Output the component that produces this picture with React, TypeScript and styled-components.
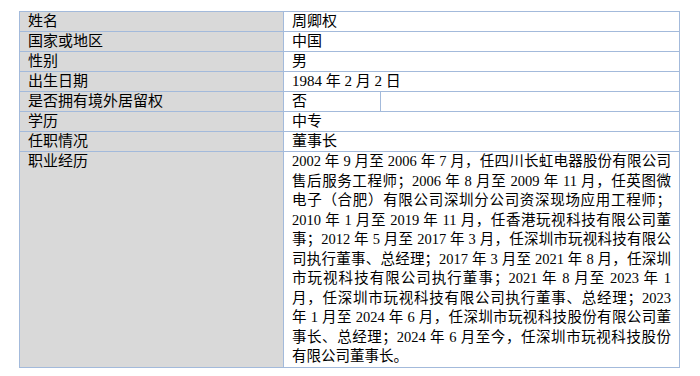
import styled, { createGlobalStyle } from 'styled-components';

const GlobalStyle = createGlobalStyle`
  html, body {
    margin: 0;
    padding: 0;
    background: #ffffff;
  }
  body {
    font-family: "Liberation Serif", "Noto Sans CJK SC", serif;
    color: #000;
  }
`;

type Row = {
  label: string;
  value: string;
  split?: boolean;
};

const rows: Row[] = [
  { label: '姓名', value: '周卿权' },
  { label: '国家或地区', value: '中国' },
  { label: '性别', value: '男' },
  { label: '出生日期', value: '1984 年 2 月 2 日' },
  { label: '是否拥有境外居留权', value: '否', split: true },
  { label: '学历', value: '中专' },
  { label: '任职情况', value: '董事长' },
];

// lines kept as in the source document so the justified breaks line up
const career = [
  '2002 年 9 月至 2006 年 7 月，任四川长虹电器股份有限公司',
  '售后服务工程师；2006 年 8 月至 2009 年 11 月，任英图微',
  '电子（合肥）有限公司深圳分公司资深现场应用工程师；',
  '2010 年 1 月至 2019 年 11 月，任香港玩视科技有限公司董',
  '事；2012 年 5 月至 2017 年 3 月，任深圳市玩视科技有限公',
  '司执行董事、总经理；2017 年 3 月至 2021 年 8 月，任深圳',
  '市玩视科技有限公司执行董事；2021 年 8 月至 2023 年 1',
  '月，任深圳市玩视科技有限公司执行董事、总经理；2023',
  '年 1 月至 2024 年 6 月，任深圳市玩视科技股份有限公司董',
  '事长、总经理；2024 年 6 月至今，任深圳市玩视科技股份',
  '有限公司董事长。',
];

const Page = styled.div`
  padding: 11px 0 0 19px;
`;

const Table = styled.table`
  width: 660px;
  border-collapse: collapse;
  table-layout: fixed;
  font-size: 15px;
`;

const Cell = styled.td<{ $label?: boolean; $tall?: boolean }>`
  border: 1px solid #a3badb;
  background: ${(p) => (p.$label ? '#d9d9d9' : '#ffffff')};
  height: 19px;
  padding: 0 8px 0 8px;
  line-height: ${(p) => (p.$tall ? '19.5px' : '19px')};
  font-size: ${(p) => (p.$tall ? '14.5px' : '15px')};
  vertical-align: top;
  text-align: left;
`;

const Line = styled.span<{ $last?: boolean }>`
  display: block;
  text-align: ${(p) => (p.$last ? 'left' : 'justify')};
  text-align-last: ${(p) => (p.$last ? 'left' : 'justify')};
`;

export default function App() {
  return (
    <Page>
      <GlobalStyle />
      <Table>
        <colgroup>
          <col style={{ width: 264 }} />
          <col style={{ width: 97 }} />
          <col style={{ width: 299 }} />
        </colgroup>
        <tbody>
          {rows.map((r) => (
            <tr key={r.label}>
              <Cell $label>{r.label}</Cell>
              {r.split ? (
                <>
                  <Cell>{r.value}</Cell>
                  <Cell />
                </>
              ) : (
                <Cell colSpan={2}>{r.value}</Cell>
              )}
            </tr>
          ))}
          <tr>
            <Cell $label>职业经历</Cell>
            <Cell colSpan={2} $tall>
              {career.map((line, i) => (
                <Line key={i} $last={i === career.length - 1}>
                  {line}
                </Line>
              ))}
            </Cell>
          </tr>
        </tbody>
      </Table>
    </Page>
  );
}
